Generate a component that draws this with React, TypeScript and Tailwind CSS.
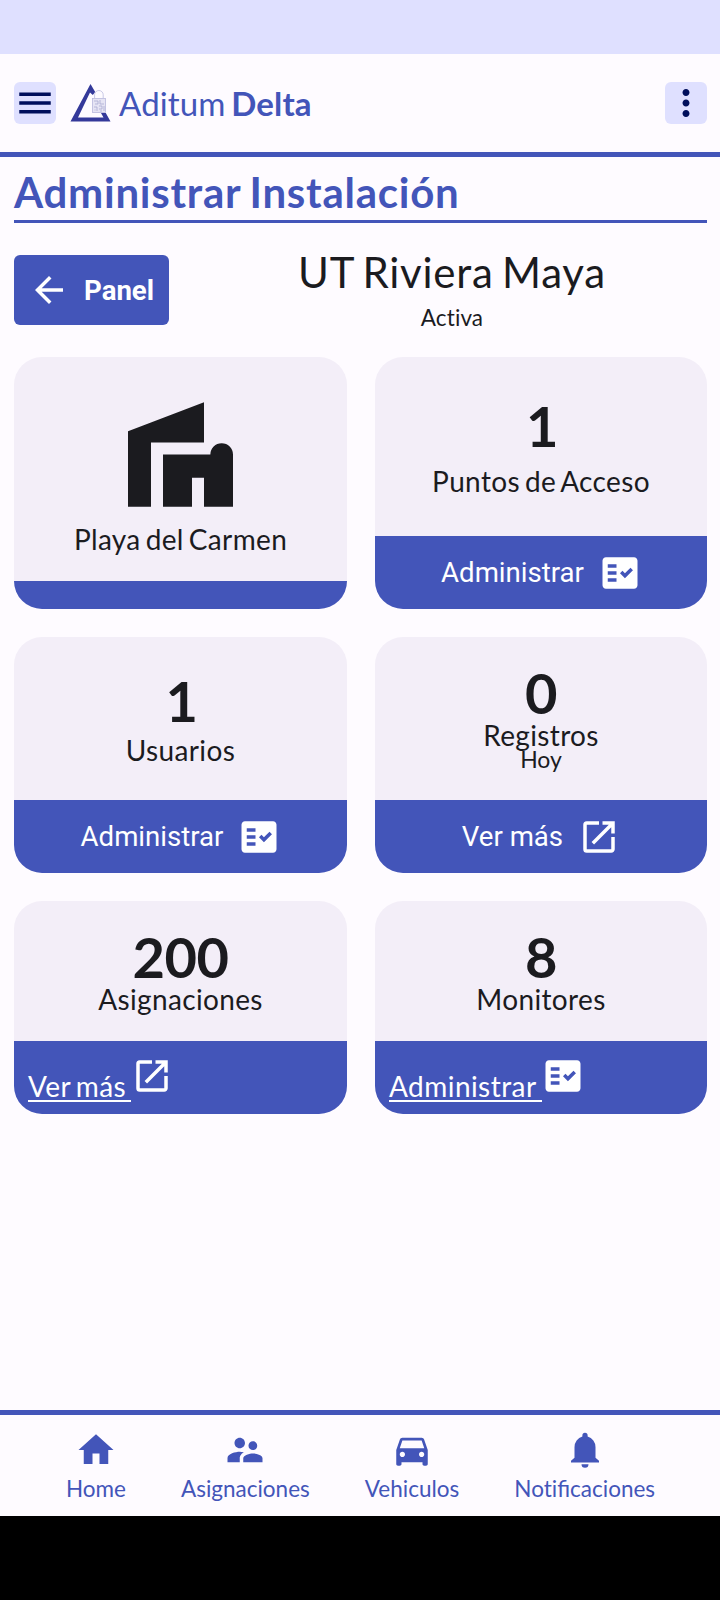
import type { ReactNode } from "react";
import {
  MdArrowBack,
  MdDirectionsCar,
  MdFactCheck,
  MdHome,
  MdMenu,
  MdMoreVert,
  MdOpenInNew,
  MdSupervisorAccount,
} from "react-icons/md";

function Logo() {
  return (
    <svg className="h-[40px] w-[42px]" viewBox="0 0 42 40" fill="none">
      <path
        fill="#34399a"
        fillRule="evenodd"
        d="M20.5 1 25.2 9 22.8 12 20 9.5 8 34.5h25.5L31 30h4.8L40.5 38.6H.5z"
      />
      <path d="M24.6 15v-3.2a4.3 4.3 0 0 1 8.6 0V15" stroke="#c9c9e6" strokeWidth="1" />
      <rect x="22.5" y="15.5" width="13" height="14" fill="#e6e4f4" stroke="#b9b9dd" strokeWidth=".8" />
      <path
        d="M24 18h4v3h-3M30 17v4h4M24 24h3v4M29 23h3v3h-3M34 23v5M30 28h2M24.5 27h1"
        stroke="#aaa9d2"
        strokeWidth=".8"
      />
    </svg>
  );
}

function ModernHome() {
  return (
    <svg className="h-[105px] w-[105px] text-[#1b1b1f]" viewBox="0 0 315 314" fill="currentColor">
      <path d="M0 87 228 0V121H69V314H0z" />
      <path d="M105 314V157H247a34 34 0 0 1 68 0V314H228V227H192V314z" />
    </svg>
  );
}

function Bell() {
  return (
    <svg className="h-[42px] w-[42px]" viewBox="0 0 24 24" fill="currentColor">
      <path d="M12 2.2a1.5 1.5 0 0 1 1.5 1.5v.6A6.3 6.3 0 0 1 18 10.4V16.4l2 1.7v1H4v-1l2-1.7v-6A6.3 6.3 0 0 1 10.5 4.3v-.6A1.5 1.5 0 0 1 12 2.2z" />
      <path d="M10 20.1h4a2 2 0 0 1-4 0z" />
    </svg>
  );
}

function Card({ className, children, footer }: { className: string; children: ReactNode; footer: ReactNode }) {
  return (
    <section className={`flex flex-col overflow-hidden rounded-[28px] bg-[#f3eef8] text-[#1b1b1f] ${className}`}>
      <div className="flex flex-1 flex-col items-center">{children}</div>
      {footer}
    </section>
  );
}

const Count = ({ children, className }: { children: ReactNode; className: string }) => (
  <p className={`text-[56px] leading-[56px] font-bold tracking-[-0.4px] ${className}`}>{children}</p>
);

const Label = ({ children, className = "" }: { children: ReactNode; className?: string }) => (
  <p
    className={`text-[28px] leading-[28px] tracking-[0.35px] whitespace-nowrap [word-spacing:-2.5px] ${className}`}
  >
    {children}
  </p>
);

function ButtonFooter({ label, icon }: { label: string; icon: ReactNode }) {
  return (
    <button className="flex h-[73px] shrink-0 items-center justify-center gap-[15px] bg-[#4355b9] font-[Roboto,sans-serif] text-[27.6px] text-white">
      {label}
      {icon}
    </button>
  );
}

function LinkFooter({ label, icon }: { label: string; icon: ReactNode }) {
  return (
    <div className="flex h-[73px] shrink-0 items-start bg-[#4355b9] pt-[14px] pl-[14px] text-white">
      <a className="mt-[17px] border-b-2 border-white pr-[5px] text-[28px] leading-[28px] tracking-[0.45px] [word-spacing:-2.5px]">
        {label}
      </a>
      {icon}
    </div>
  );
}

function NavItem({ label, icon }: { label: ReactNode; icon: ReactNode }) {
  return (
    <a className="flex flex-col items-center">
      {icon}
      <span className="mt-[4px] text-[22.5px] leading-[28px]">{label}</span>
    </a>
  );
}

export default function App() {
  return (
    <div className="flex h-[1600px] w-[720px] flex-col bg-[#fefbff] font-[Lato,sans-serif] text-[#1b1b1f]">
      <div className="h-[54px] shrink-0 bg-[#dfe0ff]" />
      <header className="flex h-[103px] shrink-0 items-start border-b-[5px] border-[#4355b9] px-[14px] pt-[28px]">
        <button className="rounded-[6px] bg-[#dfe0ff] text-[#000f5c]">
          <MdMenu size={42} />
        </button>
        <div className="mt-[1px] ml-[14px]">
          <Logo />
        </div>
        <p className="ml-[7px] text-[33px] leading-[42px] tracking-[0.15px] text-[#4355b9] [word-spacing:-3px]">
          Aditum <b>Delta</b>
        </p>
        <button className="mr-[-1px] ml-auto rounded-[6px] bg-[#dfe0ff] text-[#000f5c]">
          <MdMoreVert size={42} />
        </button>
      </header>

      <main className="flex flex-1 flex-col pr-[13px] pl-[14px]">
        <h1 className="mt-[10px] h-[56px] border-b-[3px] border-[#4355b9] text-[42px] leading-[51px] font-bold tracking-[0.75px] text-[#4355b9] [word-spacing:-2px]">
          Administrar Instalación
        </h1>
        <div className="mt-[32px] flex h-[102px] items-start">
          <button className="flex h-[70px] w-[155px] items-center rounded-[6px] bg-[#4355b9] pl-[14px] font-[Roboto,sans-serif] text-[27.6px] font-bold text-white">
            <MdArrowBack size={42} />
            <span className="mt-[2px] ml-[14px]">Panel</span>
          </button>
          <div className="ml-[28px] flex flex-1 flex-col items-center">
            <h2 className="-mt-[8px] text-[42px] leading-[50px] tracking-[0.75px] [word-spacing:-3px]">
              UT Riviera Maya
            </h2>
            <p className="mt-[8px] text-[22.5px] leading-[26px] tracking-[0.1px]">Activa</p>
          </div>
        </div>

        <div className="grid grid-cols-[333px_332px] gap-x-[28px] gap-y-[28px]">
          <Card className="h-[252px]" footer={<div className="h-[28px] shrink-0 bg-[#4355b9]" />}>
            <div className="mt-[45px]">
              <ModernHome />
            </div>
            <Label className="mt-[18px]">Playa del Carmen</Label>
          </Card>
          <Card className="h-[252px]" footer={<ButtonFooter label="Administrar" icon={<MdFactCheck size={42} />} />}>
            <Count className="mt-[41px] pl-[2px]">1</Count>
            <Label className="mt-[13px]">Puntos de Acceso</Label>
          </Card>
          <Card className="h-[236px]" footer={<ButtonFooter label="Administrar" icon={<MdFactCheck size={42} />} />}>
            <Count className="mt-[36px] pl-[2px]">1</Count>
            <Label className="mt-[7px]">Usuarios</Label>
          </Card>
          <Card className="h-[236px]" footer={<ButtonFooter label="Ver más" icon={<MdOpenInNew size={42} />} />}>
            <Count className="mt-[28px]">0</Count>
            <Label>Registros</Label>
            <p className="-mt-[2px] text-[23px] leading-[24px]">Hoy</p>
          </Card>
          <Card className="h-[213px]" footer={<LinkFooter label="Ver más" icon={<MdOpenInNew size={42} />} />}>
            <Count className="mt-[28px]">200</Count>
            <Label>Asignaciones</Label>
          </Card>
          <Card className="h-[213px]" footer={<LinkFooter label="Administrar" icon={<MdFactCheck size={42} />} />}>
            <Count className="mt-[28px]">8</Count>
            <Label>Monitores</Label>
          </Card>
        </div>
      </main>

      <nav className="flex h-[106px] shrink-0 justify-center gap-[55px] border-t-[5px] border-[#4355b9] pt-[14px] pl-px text-[#4355b9]">
        <NavItem label="Home" icon={<MdHome size={42} />} />
        <NavItem label="Asignaciones" icon={<MdSupervisorAccount size={42} />} />
        <NavItem label="Vehiculos" icon={<MdDirectionsCar size={42} />} />
        <NavItem
          label={
            <>
              <span className="tracking-[0.01px]">Not</span>ificaciones
            </>
          }
          icon={<Bell />}
        />
      </nav>
      <div className="h-[84px] shrink-0 bg-black" />
    </div>
  );
}
